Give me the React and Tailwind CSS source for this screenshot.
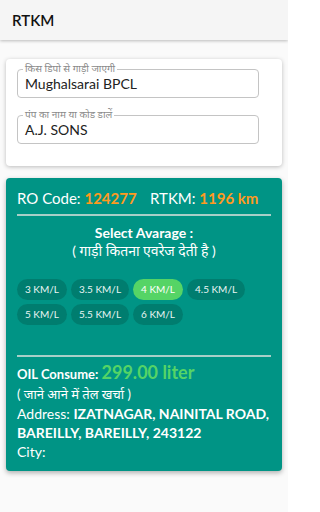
import React from "react";

const chips = ["3 KM/L", "3.5 KM/L", "4 KM/L", "4.5 KM/L", "5 KM/L", "5.5 KM/L", "6 KM/L"];

function Field({ label, value, mt }) {
  return (
    <div className={`relative h-[29px] w-[242px] rounded border border-[#c4c4c4] ${mt}`}>
      <span className="absolute left-[5px] top-[-8px] bg-white px-[2px] text-[10px] leading-[13px] text-[#8a8a8a]">
        {label}
      </span>
      <div className="pl-[7px] pt-[5px] text-[14px] leading-[18px] text-[#222]">{value}</div>
    </div>
  );
}

export default function App() {
  return (
    <div
      className="min-h-[512px] w-[288px] overflow-hidden bg-[#fafafa]"
      style={{ fontFamily: 'Lato, "Noto Sans", sans-serif' }}
    >
      <div className="flex h-10 items-center bg-[#f5f5f5] px-3 text-[15px] font-semibold text-[#111] shadow-[0_1px_3px_rgba(0,0,0,0.25)]">
        RTKM
      </div>

      <div className="mx-1.5 mt-[19px] rounded bg-white pb-[22px] pl-[11px] pt-[10px] shadow-[0_1px_4px_rgba(0,0,0,0.25)]">
        <Field label="किस डिपो से गाड़ी जाएगी" value="Mughalsarai BPCL" mt="" />
        <Field label="पंप का नाम या कोड डालें" value="A.J. SONS" mt="mt-[17px]" />
      </div>

      <div className="mx-1.5 mt-3 rounded-sm bg-[#009485] px-[11px] pb-[10px] pt-[10px] text-white shadow-[0_2px_5px_rgba(0,0,0,0.3)]">
        <div className="flex text-[15px] leading-[20px]">
          <div className="w-[133px]">
            RO Code: <span className="font-bold text-[#ff9a1f]">124277</span>
          </div>
          <div>
            RTKM: <span className="font-bold text-[#ff9a1f]">1196 km</span>
          </div>
        </div>
        <div className="mt-[6px] h-[2px] bg-[#a8cfc8]" />
        <div className="mt-[7px] text-center text-[14px] font-bold leading-[20px]">Select Avarage :</div>
        <div className="text-center text-[14px] leading-[16px]">( गाड़ी कितना एवरेज देती है )</div>

        <div className="mt-[20px] flex flex-wrap gap-x-[4px] gap-y-[4px]">
          {chips.map((c) => (
            <div
              key={c}
              className={`flex h-[21px] items-center rounded-full px-[8px] text-[10px] ${
                c === "4 KM/L" ? "bg-[#55d466] text-white" : "bg-[#007d6f] text-[#eaf5f3]"
              }`}
            >
              {c}
            </div>
          ))}
        </div>

        <div className="mt-[30px] h-[2px] bg-[#a8cfc8]" />
        <div className="mt-[4px] flex items-baseline text-[13px] font-bold leading-[22px]">
          OIL Consume:&nbsp;<span className="text-[18px] text-[#55d466]">299.00 liter</span>
        </div>
        <div className="text-[13px] leading-[19px]">( जाने आने में तेल खर्चा )</div>
        <div className="text-[14px] leading-[19px]">
          Address: <span className="font-bold">IZATNAGAR, NAINITAL ROAD, BAREILLY, BAREILLY, 243122</span>
        </div>
        <div className="text-[14px] leading-[19px]">City:</div>
      </div>
    </div>
  );
}
